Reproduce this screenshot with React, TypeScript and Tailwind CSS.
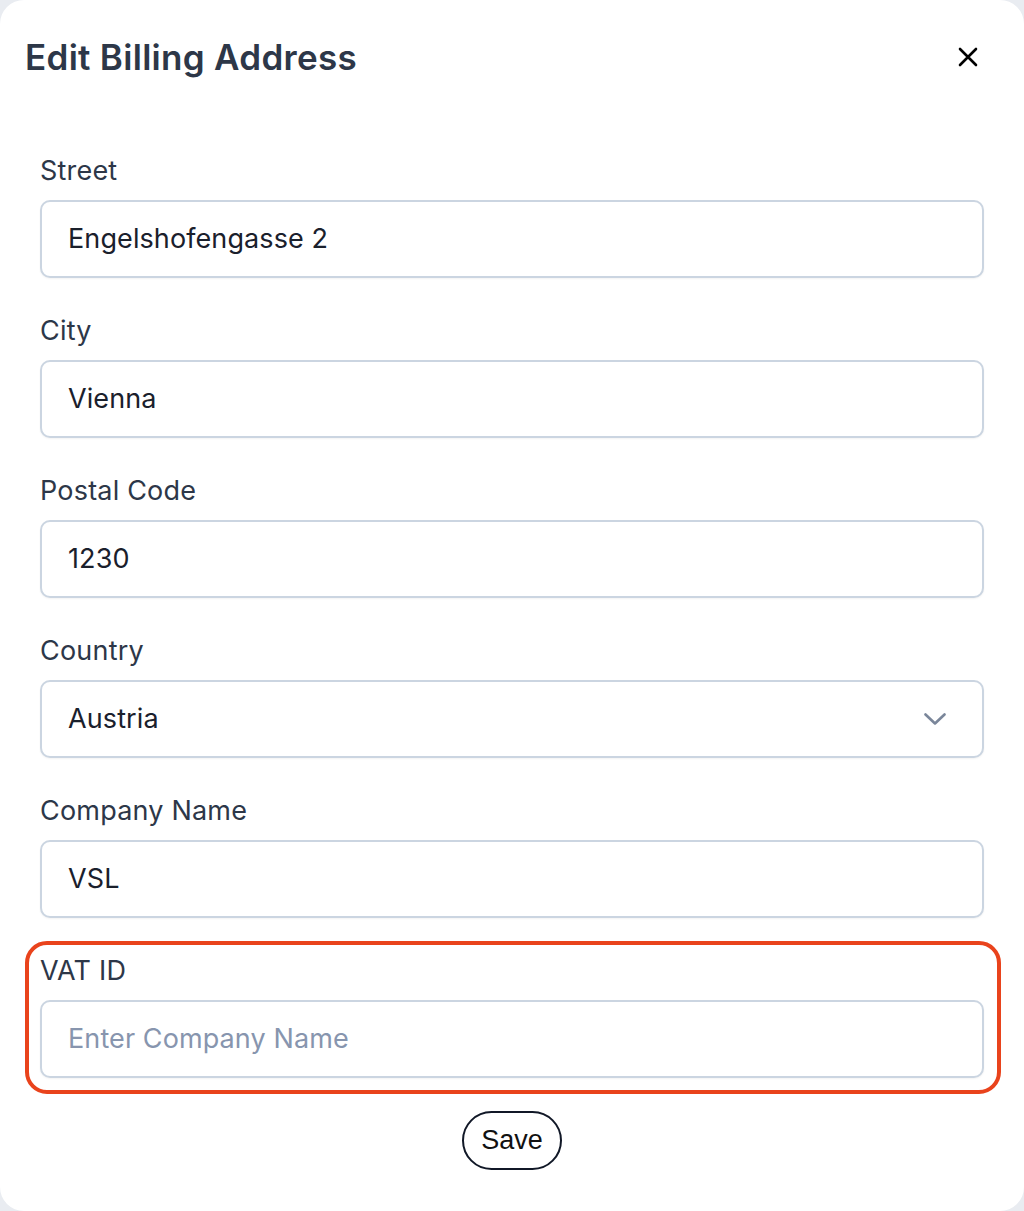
import React from "react";

const fields: { label: string; value?: string; placeholder?: string; select?: boolean }[] = [
  { label: "Street", value: "Engelshofengasse 2" },
  { label: "City", value: "Vienna" },
  { label: "Postal Code", value: "1230" },
  { label: "Country", value: "Austria", select: true },
  { label: "Company Name", value: "VSL" },
];

function Field({ label, value, placeholder, select }: { label: string; value?: string; placeholder?: string; select?: boolean }) {
  return (
    <div className="flex flex-col">
      <div className="h-[40px] leading-[40px] text-[27px] text-[#2d3748] mb-[9px] tracking-[0.2px]">{label}</div>
      <div className="h-[78px] border-2 border-[#cbd5e1] rounded-[10px] bg-white flex items-center pl-[26px] pr-[36px] shadow-[0_1px_2px_rgba(0,0,0,0.05)]">
        {value ? (
          <span className="text-[27px] text-[#1a202c] tracking-[0.1px] flex-1">{value}</span>
        ) : (
          <span className="text-[27px] text-[#8795ae] tracking-[0.1px] flex-1">{placeholder}</span>
        )}
        {select && (
          <svg width="22" height="12" viewBox="0 0 22 12" fill="none">
            <path d="M1.5 1.5 L11 10.5 L20.5 1.5" stroke="#7a869a" strokeWidth="2.6" strokeLinecap="round" strokeLinejoin="round" />
          </svg>
        )}
      </div>
    </div>
  );
}

export default function App() {
  return (
    <div className="w-[1024px] h-[1211px] bg-[#e9ecf1]" style={{ fontFamily: "Inter, 'Noto Sans', sans-serif" }}>
      <div className="h-full bg-white rounded-[24px]">
        <div className="flex items-center justify-between pl-[25px] pr-[46px] pt-[37px] h-[77px]">
          <h1 className="text-[35px] leading-[40px] font-semibold text-[#2d3748] tracking-[0.3px]">Edit Billing Address</h1>
          <svg width="20" height="20" viewBox="0 0 20 20" fill="none">
            <path d="M2 2 L18 18 M18 2 L2 18" stroke="#000" strokeWidth="2.6" strokeLinecap="round" />
          </svg>
        </div>
        <div className="flex flex-col gap-[33px] px-[40px] pt-[74px]">
          {fields.map((f) => (
            <Field key={f.label} {...f} />
          ))}
          <div className="relative">
            <div className="absolute -left-[15px] -top-[10px] -right-[17px] -bottom-[16px] border-4 border-[#e9431c] rounded-[22px] pointer-events-none" />
            <Field label="VAT ID" placeholder="Enter Company Name" />
          </div>
        </div>
        <div className="flex justify-center pt-[33px]">
          <button
            className="h-[59px] px-[17px] border-2 border-[#111827] rounded-full text-[27px] text-[#111] bg-white"
            style={{ fontFamily: "'Liberation Sans', Arial, sans-serif" }}
          >
            Save
          </button>
        </div>
      </div>
    </div>
  );
}
